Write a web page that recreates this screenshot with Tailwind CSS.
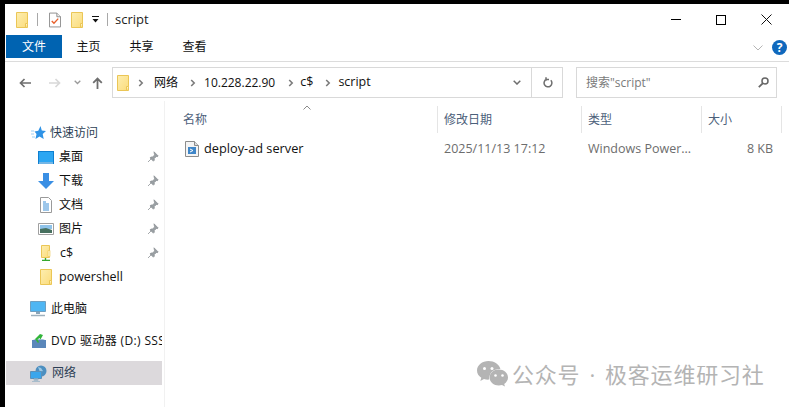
<!doctype html>
<html lang="zh">
<head>
<meta charset="utf-8">
<title>script</title>
<script src="https://cdn.jsdelivr.net/npm/@tailwindcss/browser@4"></script>
</head>
<body class="w-[789px] h-[407px] overflow-hidden bg-black pl-[5px] pt-[4px] font-['Open_Sans','Noto_Sans_CJK_SC',sans-serif] text-[13px] text-[#111]">
<svg class="absolute h-0 w-0">
  <defs>
    <linearGradient id="fg" x1="0" y1="0" x2="1" y2="1"><stop offset="0" stop-color="#fdeeb0"/><stop offset="1" stop-color="#fbdc7c"/></linearGradient>
    <symbol id="folder" viewBox="0 0 12 16">
      <path d="M.5.5h11v15H.5z" fill="url(#fg)" stroke="#ebc656"/>
      <path d="M9.5 15.5v-4h2" fill="#fff3c4" stroke="#ebc656"/>
    </symbol>
    <symbol id="pin" viewBox="0 0 12 12">
      <path d="M7 .8l4.200 4.200-1 .7-.8-.3-2.200 2.200.1 1.600-.9.9L3 6.900l.9-.9 1.600.1 2.200-2.200-.3-.8zM4.400 7.600L1 11" fill="#9aa0a4" stroke="#8d9296" stroke-width=".8"/>
    </symbol>
    <symbol id="chev" viewBox="0 0 6 8">
      <path d="M1.200 1l3 3-3 3" fill="none" stroke="#7b7b7b" stroke-width="1.600"/>
    </symbol>
  </defs>
</svg>

<div class="relative flex h-[403px] w-[784px] flex-col bg-white">

  <!-- title bar -->
  <div class="flex h-[31px] shrink-0 items-center pl-[11px]">
    <svg class="h-[16px] w-[12px]"><use href="#folder"/></svg>
    <span class="ml-[9px] h-[13px] w-px bg-[#a8a8a8]"></span>
    <svg class="ml-[11px] h-[16px] w-[12px]" viewBox="0 0 13 16">
      <path d="M.5.5h8l4 4v11H.5z" fill="#fff" stroke="#8a8a8a"/>
      <path d="M8.500.5v4h4" fill="#eee" stroke="#8a8a8a"/>
      <path d="M3 9l2.400 2.600L10 6.500" fill="none" stroke="#e8602c" stroke-width="1.500"/>
    </svg>
    <svg class="ml-[10px] h-[16px] w-[12px]"><use href="#folder"/></svg>
    <svg class="ml-[9px] h-[7px] w-[7px]" viewBox="0 0 7 7"><path d="M0 0h7v1H0zM.5 3h6L3.500 6.500z" fill="#111"/></svg>
    <span class="ml-[8px] h-[13px] w-px bg-[#a8a8a8]"></span>
    <span class="ml-[7px] text-[13px] leading-none text-[#222]">script</span>
    <div class="ml-auto flex h-full items-center">
      <div class="flex h-full w-[46px] items-center justify-center"><span class="h-px w-[10px] bg-black"></span></div>
      <div class="flex h-full w-[45px] items-center justify-center pr-px"><span class="h-[10px] w-[10px] border border-black"></span></div>
      <div class="flex h-full w-[45px] items-center justify-center">
        <svg class="h-[11px] w-[11px]" viewBox="0 0 11 11"><path d="M.5.500l10 10M10.500.5l-10 10" stroke="#111" fill="none"/></svg>
      </div>
    </div>
  </div>

  <!-- ribbon tabs -->
  <div class="flex h-[27px] shrink-0 border-b border-[#dcdcdc] pl-px">
    <div class="flex h-[23px] w-[56px] items-center justify-center bg-[#0063b1] pt-px text-[12px] text-white">文件</div>
    <div class="flex h-[23px] w-[53px] items-center justify-center pt-px text-[12px]">主页</div>
    <div class="flex h-[23px] w-[53px] items-center justify-center pt-px text-[12px]">共享</div>
    <div class="flex h-[23px] w-[53px] items-center justify-center pt-px text-[12px]">查看</div>
    <div class="ml-auto flex h-[23px] items-center pr-[2px] pt-[2px]">
      <svg class="h-[6px] w-[10px]" viewBox="0 0 10 6"><path d="M.5.500l4.500 4.500 4.500-4.500" fill="none" stroke="#b5b5b5"/></svg>
      <span class="ml-[9px] flex h-[15px] w-[15px] items-center justify-center rounded-full bg-[#0f68bd] text-[12px] font-bold leading-none text-white">?</span>
    </div>
  </div>

  <!-- navigation bar -->
  <div class="flex h-[39px] shrink-0 items-center pl-[14px] pt-[2px]">
    <svg class="h-[10px] w-[12px]" viewBox="0 0 12 10"><path d="M12 5H2M5.500 1L1.500 5l4 4" fill="none" stroke="#6e6e6e" stroke-width="1.700"/></svg>
    <svg class="ml-[18px] h-[10px] w-[12px]" viewBox="0 0 12 10"><path d="M0 5h10M6.500 1l4 4-4 4" fill="none" stroke="#d8d8d8" stroke-width="1.700"/></svg>
    <svg class="ml-[13px] h-[5px] w-[7px]" viewBox="0 0 7 5"><path d="M.7.700l2.800 2.800L6.300.7" fill="none" stroke="#9a9a9a" stroke-width="1.300"/></svg>
    <svg class="ml-[11px] h-[12px] w-[11px]" viewBox="0 0 11 12"><path d="M5.500 12V2M1.200 5.800l4.300-4.300 4.300 4.300" fill="none" stroke="#6e6e6e" stroke-width="1.800"/></svg>
    <div class="ml-[9px] flex h-[31px] w-[451px] items-center border border-[#d9d9d9] pl-[4px]">
      <svg class="h-[16px] w-[12px]"><use href="#folder"/></svg>
      <svg class="ml-[9px] h-[8px] w-[6px]"><use href="#chev"/></svg>
      <span class="ml-[10px] text-[12px]">网络</span>
      <svg class="ml-[12px] h-[8px] w-[6px]"><use href="#chev"/></svg>
      <span class="ml-[8px] text-[12px]">10.228.22.90</span>
      <svg class="ml-[13px] h-[8px] w-[6px]"><use href="#chev"/></svg>
      <span class="ml-[6px] text-[12.500px]">c$</span>
      <svg class="ml-[12px] h-[8px] w-[6px]"><use href="#chev"/></svg>
      <span class="ml-[7px] text-[12.500px]">script</span>
      <div class="ml-auto flex h-full items-center">
        <svg class="h-[5px] w-[8px]" viewBox="0 0 8 5"><path d="M.7.700l3.300 3.300 3.300-3.300" fill="none" stroke="#6e6e6e" stroke-width="1.500"/></svg>
        <span class="ml-[10px] h-full w-px bg-[#d9d9d9]"></span>
        <svg class="ml-[11px] mr-[9px] h-[11px] w-[10px]" viewBox="0 0 10 11"><path d="M7.800 3.200A3.900 3.900 0 1 1 3.500 2.300M3 .3v3.400M3 2.500h3" fill="none" stroke="#6e6e6e" stroke-width="1.500"/></svg>
      </div>
    </div>
    <div class="ml-[13px] flex h-[31px] w-[201px] items-center border border-[#d9d9d9] pl-[9px] pr-[7px]">
      <span class="text-[12px] text-[#7a7a7a]">搜索"script"</span>
      <svg class="ml-auto h-[11px] w-[11px]" viewBox="0 0 11 11"><circle cx="7" cy="4" r="3" fill="none" stroke="#666" stroke-width="1.500"/><path d="M4.700 6.300L.8 10.200" stroke="#666" stroke-width="1.800"/></svg>
    </div>
  </div>

  <!-- main area -->
  <div class="flex min-h-0 flex-1">
    <!-- navigation pane -->
    <div class="w-[160px] shrink-0 border-r border-[#f1f1f1] pl-px pt-[20px]">
      <div class="flex h-[24px] w-[156px] items-center pl-[25px]">
        <svg class="h-[14px] w-[15px]" viewBox="0 0 15 14"><path d="M9.500 0l1.300 4.600 4.200.4-3.300 3 1 5-4.200-2.600L4.500 13l1-5-2-2.500 3.800-.7z" fill="#2f93e6"/><path d="M0 5h3M0 8h3M1 11h3" stroke="#9fd0f4"/></svg>
        <span class="ml-[4px] text-[12px] text-[#2d3f55]">快速访问</span>
      </div>
      <div class="flex h-[24px] w-[156px] items-center pl-[32px] pr-[3px]">
        <svg class="h-[13px] w-[16px]" viewBox="0 0 16 13"><path d="M0 0h16v13H0z" fill="#0f7fd0"/><path d="M1 1h14v10H1z" fill="#2ca6f2"/><path d="M1 12h14" stroke="#d8eefc"/></svg>
        <span class="ml-[5px] text-[12px]">桌面</span>
        <svg class="ml-auto h-[12px] w-[12px]"><use href="#pin"/></svg>
      </div>
      <div class="flex h-[24px] w-[156px] items-center pl-[32px] pr-[3px]">
        <svg class="h-[16px] w-[16px]" viewBox="0 0 16 16"><path d="M5 0h6v8h5l-8 8-8-8h5z" fill="#3a8fe4"/></svg>
        <span class="ml-[5px] text-[12px]">下载</span>
        <svg class="ml-auto h-[12px] w-[12px]"><use href="#pin"/></svg>
      </div>
      <div class="flex h-[24px] w-[156px] items-center pl-[34px] pr-[3px]">
        <svg class="h-[16px] w-[12px]" viewBox="0 0 12 16"><path d="M.5.500h8l3 3v12H.5z" fill="#fff" stroke="#9a9a9a"/><path d="M3 5h3M3 7h6M3 9h6M3 11h6M3 13h6" stroke="#3d8fd6"/></svg>
        <span class="ml-[7px] text-[12px]">文档</span>
        <svg class="ml-auto h-[12px] w-[12px]"><use href="#pin"/></svg>
      </div>
      <div class="flex h-[24px] w-[156px] items-center pl-[32px] pr-[3px]">
        <svg class="h-[12px] w-[16px]" viewBox="0 0 16 12"><path d="M.5.500h15v11H.5z" fill="#fff" stroke="#a0a0a0"/><path d="M2 2h12v4H2z" fill="#8fc3ea"/><path d="M2 6l6-1 6 2v3H2z" fill="#47705f"/></svg>
        <span class="ml-[5px] text-[12px]">图片</span>
        <svg class="ml-auto h-[12px] w-[12px]"><use href="#pin"/></svg>
      </div>
      <div class="flex h-[24px] w-[156px] items-center pl-[35px] pr-[3px]">
        <svg class="h-[16px] w-[10px]" viewBox="0 0 10 16"><path d="M.5.500h8v12h-8z" fill="url(#fg)" stroke="#ebc656"/><path d="M7 5.500h2v6H7z" fill="#fff3c4" stroke="#ebc656" stroke-width=".6"/><path d="M4.500 13v2M1 15.500h8" stroke="#35a82f" stroke-width="1.400"/></svg>
        <span class="ml-[9px] text-[12.500px]">c$</span>
        <svg class="ml-auto h-[12px] w-[12px]"><use href="#pin"/></svg>
      </div>
      <div class="flex h-[24px] w-[156px] items-center pl-[34px]">
        <svg class="h-[16px] w-[12px]"><use href="#folder"/></svg>
        <span class="ml-[7px] text-[12.500px]">powershell</span>
      </div>
      <div class="mt-[8px] flex h-[24px] w-[156px] items-center pl-[24px]">
        <svg class="h-[16px] w-[16px]" viewBox="0 0 16 16"><path d="M.5.500h15v10H.5z" fill="#4fb6f3" stroke="#6f9fc0"/><path d="M6 11h4v2H6z" fill="#8aa4b8"/><path d="M1 14.500h14" stroke="#9fb0bd" stroke-width="1.500"/></svg>
        <span class="ml-[5px] text-[12px]">此电脑</span>
      </div>
      <div class="mt-[8px] flex h-[24px] w-[156px] items-center pl-[26px]">
        <svg class="h-[14px] w-[14px]" viewBox="0 0 14 14"><path d="M0 6h14v8H0z" fill="#5a87ba"/><path d="M1 6l2-1h8l2 1z" fill="#a3bed8"/><path d="M8 0L3 5l3 4 1-1-1.500-2.500L7.500 4l1 1.500L11 1z" fill="#32b53a"/></svg>
        <span class="ml-[5px] w-[111px] overflow-hidden whitespace-nowrap text-[12px] tracking-[.35px]">DVD 驱动器 (D:) SSS</span>
      </div>
      <div class="mt-[8px] flex h-[24px] w-[156px] items-center bg-[#dcd9dc] pl-[24px]">
        <svg class="h-[17px] w-[17px]" viewBox="0 0 17 17"><circle cx="11" cy="6" r="5.500" fill="#4d8fc0"/><path d="M8 2l3 1 2 3-3 1z" fill="#9cc8e4"/><path d="M.5 6.500h11v7H.5z" fill="#3ba6ec" stroke="#5d90b8"/><path d="M4 14h4v1.500H4zM2 16.500h8" fill="#8ab0c8" stroke="#a8bccb"/></svg>
        <span class="ml-[5px] text-[12px] text-[#2d3f55]">网络</span>
      </div>
    </div>

    <!-- file list -->
    <div class="flex-1 pl-px pt-[5px]">
      <div class="grid h-[27px] grid-cols-[272px_144px_120px_80px] items-stretch text-[12px] text-[#4c607a]">
        <div class="flex items-center border-r border-[#e5e5e5] pl-[17px]">名称</div>
        <div class="flex items-center border-r border-[#e5e5e5] pl-[6px]">修改日期</div>
        <div class="flex items-center border-r border-[#e5e5e5] pl-[6px]">类型</div>
        <div class="flex items-center border-r border-[#e5e5e5] pl-[6px]">大小</div>
      </div>
      <div class="mt-[4px] grid h-[24px] grid-cols-[272px_144px_120px_80px] items-center text-[12.500px] text-[#6d6d6d]">
        <div class="flex items-center pl-[19px] text-[12.750px] text-[#111]">
          <svg class="h-[16px] w-[14px]" viewBox="0 0 14 16"><path d="M.5.500h9l4 4v11H.5z" fill="#f4f4f4" stroke="#8c8c8c"/><path d="M9.500.5v4h4" fill="#ddd" stroke="#8c8c8c"/><path d="M3 6h8v7H3z" fill="#3f86c8"/><path d="M5 8l3 1.500L5 11" fill="none" stroke="#fff"/></svg>
          <span class="ml-[5px]">deploy-ad server</span>
        </div>
        <div class="pl-[6px]">2025/11/13 17:12</div>
        <div class="pl-[6px]">Windows Power...</div>
        <div class="pr-[9px] text-right">8 KB</div>
      </div>
    </div>
  </div>

  <!-- sort caret over the header -->
  <svg class="absolute left-[298px] top-[101px] h-[5px] w-[8px]" viewBox="0 0 8 5"><path d="M.5 4.500L4 1l3.500 3.500" fill="none" stroke="#8a8a8a"/></svg>

  <!-- watermark -->
  <div class="absolute left-[472px] top-[357px] flex items-center">
    <svg class="h-[26px] w-[31px]" viewBox="0 0 31 26">
      <path d="M11.500 0C5.200 0 0 4.200 0 9.500c0 3 1.700 5.600 4.300 7.300L3.300 20l3.700-1.900c1.200.4 2.600.6 4 .6.400 0 .8 0 1.200-.1C11.800 12 16.500 8 22.800 8c.3 0 .5 0 .6 0C22.300 3.400 17.300 0 11.500 0z" fill="#b4b4b4"/>
      <path d="M31 16.500c0-4.500-4.200-8-9.200-8s-9.200 3.500-9.200 8 4.200 8 9.200 8c1.100 0 2.200-.2 3.200-.5l3 1.500-.8-2.600c2.300-1.500 3.800-3.800 3.800-6.400z" fill="#b4b4b4"/>
      <circle cx="18.500" cy="14.500" r="1.300" fill="#fff"/><circle cx="25.500" cy="14.500" r="1.300" fill="#fff"/>
      <circle cx="7.500" cy="7.500" r="1.500" fill="#fff"/><circle cx="15" cy="7.500" r="1.500" fill="#fff"/>
    </svg>
    <span class="ml-[4px] whitespace-nowrap text-[22px] leading-none tracking-[.8px] text-[#b4b4b4] [word-spacing:2.5px]">公众号 · 极客运维研习社</span>
  </div>
</div>
</body>
</html>
